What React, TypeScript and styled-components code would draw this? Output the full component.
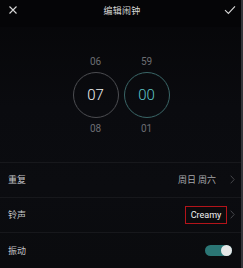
import React from 'react';
import styled, { createGlobalStyle } from 'styled-components';

const GlobalStyle = createGlobalStyle`
  html, body {
    margin: 0;
    padding: 0;
    background: #08090c;
  }
  * {
    box-sizing: border-box;
  }
`;

const Screen = styled.div`
  width: 243px;
  height: 268px;
  display: flex;
  flex-direction: column;
  background: linear-gradient(180deg, #060608 0%, #0a0b0f 40%, #0b0c10 70%, #0a0b0e 100%);
  border-right: 2px solid #34353a;
  font-family: 'Noto Sans CJK SC', 'Noto Sans', sans-serif;
  overflow: hidden;
`;

const Header = styled.div`
  height: 27px;
  display: grid;
  grid-template-columns: 30px 1fr 30px;
  align-items: center;
  background: #050507;
  padding: 0 4px 6px 7px;
`;

const IconButton = styled.div<{ align: 'start' | 'end' }>`
  display: flex;
  justify-content: ${({ align }) => (align === 'start' ? 'flex-start' : 'flex-end')};
  align-items: center;
  color: #d0d0d0;
`;

const Title = styled.div`
  text-align: center;
  color: #d8d8d8;
  font-size: 9px;
  letter-spacing: 0.3px;
`;

const Picker = styled.div`
  height: 136px;
  display: flex;
  justify-content: center;
  gap: 5px;
  padding-top: 29px;
  padding-left: 1px;
`;

const Column = styled.div`
  display: flex;
  flex-direction: column;
  align-items: center;
  gap: 4px;
`;

const SideNumber = styled.div`
  height: 12px;
  line-height: 12px;
  font-family: Roboto, 'Liberation Sans', sans-serif;
  font-size: 10px;
  color: #6c6d72;
`;

const Dial = styled.div<{ active?: boolean }>`
  width: 46px;
  height: 46px;
  border-radius: 50%;
  border: 1px solid ${({ active }) => (active ? '#3a6667' : '#4c4d51')};
  display: flex;
  align-items: center;
  justify-content: center;
  font-family: Roboto, 'Liberation Sans', sans-serif;
  font-weight: 300;
  font-size: 15px;
  color: ${({ active }) => (active ? '#5ec5c6' : '#f0f0f0')};
  margin-bottom: 1px;
`;

const List = styled.div`
  display: flex;
  flex-direction: column;
  border-top: 1px solid #17181c;
`;

const Row = styled.div<{ last?: boolean }>`
  height: 35px;
  display: flex;
  align-items: center;
  justify-content: space-between;
  padding: 0 6px 0 8px;
  border-bottom: ${({ last }) => (last ? 'none' : '1px solid #17181c')};
`;

const Label = styled.div`
  font-size: 9px;
  color: #c4c5c8;
`;

const Value = styled.div<{ gap: number }>`
  display: flex;
  align-items: center;
  gap: ${({ gap }) => gap}px;
  font-size: 9px;
  color: #a8a9ac;
`;

const Highlight = styled.div`
  width: 42px;
  height: 18px;
  border: 1.5px solid #b3141a;
  display: flex;
  align-items: center;
  justify-content: center;
  font-family: Roboto, 'Liberation Sans', sans-serif;
  font-size: 9px;
  color: #f2f2f2;
  background: #0b0b0d;
`;

const Toggle = styled.div`
  width: 27px;
  height: 11px;
  border-radius: 6px;
  background: #2b7675;
  display: flex;
  justify-content: flex-end;
  align-items: center;
  margin-right: 3px;
`;

const Knob = styled.div`
  width: 11px;
  height: 11px;
  border-radius: 50%;
  background: #e6e8e8;
`;

const Chevron = () => (
  <svg width="5" height="9" viewBox="0 0 5 9">
    <path d="M0.7 0.7 L4.2 4.5 L0.7 8.3" fill="none" stroke="#45464a" strokeWidth="1" />
  </svg>
);

export default function App() {
  return (
    <>
      <GlobalStyle />
      <Screen>
        <Header>
          <IconButton align="start">
            <svg width="12" height="12" viewBox="0 0 12 12">
              <path d="M2.5 2.5 L9.5 9.5 M9.5 2.5 L2.5 9.5" stroke="#d8d8d8" strokeWidth="1.1" />
            </svg>
          </IconButton>
          <Title>编辑闹钟</Title>
          <IconButton align="end">
            <svg width="14" height="12" viewBox="0 0 14 12">
              <path d="M2 6.2 L5.4 9.4 L12 2.4" fill="none" stroke="#d8d8d8" strokeWidth="1.1" />
            </svg>
          </IconButton>
        </Header>
        <Picker>
          <Column>
            <SideNumber>06</SideNumber>
            <Dial>07</Dial>
            <SideNumber>08</SideNumber>
          </Column>
          <Column>
            <SideNumber>59</SideNumber>
            <Dial active>00</Dial>
            <SideNumber>01</SideNumber>
          </Column>
        </Picker>
        <List>
          <Row>
            <Label>重复</Label>
            <Value gap={14}>
              周日 周六
              <Chevron />
            </Value>
          </Row>
          <Row>
            <Label>铃声</Label>
            <Value gap={3}>
              <Highlight>Creamy</Highlight>
              <Chevron />
            </Value>
          </Row>
          <Row last>
            <Label>振动</Label>
            <Toggle>
              <Knob />
            </Toggle>
          </Row>
        </List>
      </Screen>
    </>
  );
}
